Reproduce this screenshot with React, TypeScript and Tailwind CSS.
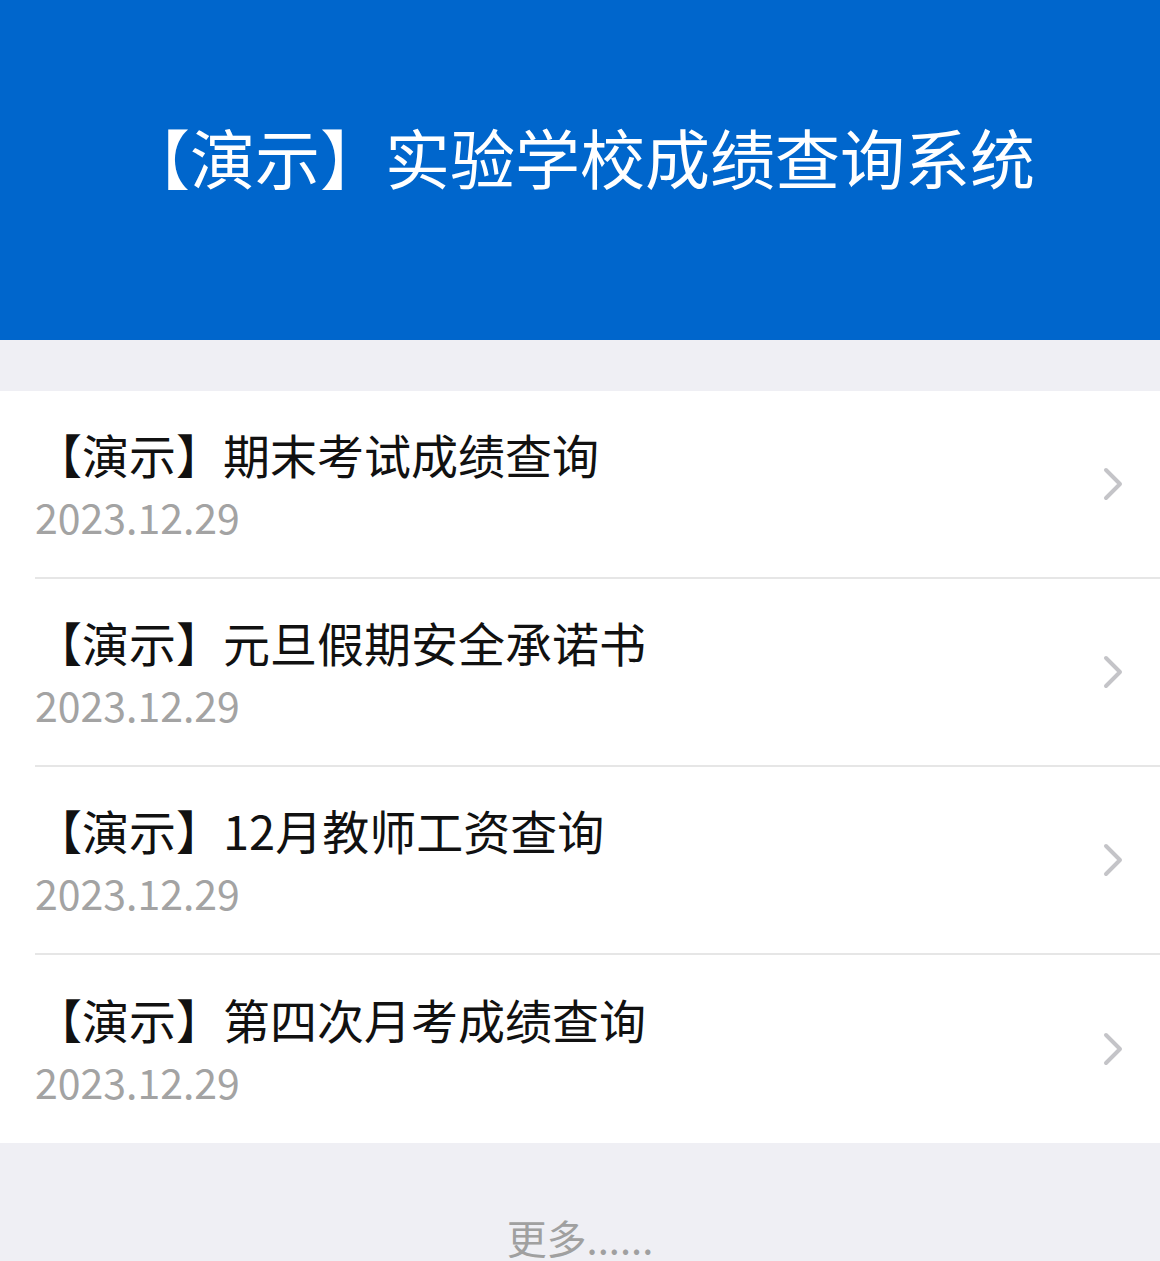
const notices = [
  { title: "【演示】期末考试成绩查询", date: "2023.12.29" },
  { title: "【演示】元旦假期安全承诺书", date: "2023.12.29" },
  { title: "【演示】12月教师工资查询", date: "2023.12.29" },
  { title: "【演示】第四次月考成绩查询", date: "2023.12.29" },
];

const font = { fontFamily: '"Noto Sans CJK SC", "Noto Sans", sans-serif' };

function Chevron() {
  return (
    <svg width="22" height="36" viewBox="0 0 22 36" fill="none" className="shrink-0">
      <polyline
        points="4,4 18,18 4,32"
        stroke="#c4c4c8"
        strokeWidth="4"
        strokeLinecap="round"
        strokeLinejoin="round"
      />
    </svg>
  );
}

export default function App() {
  return (
    <div className="min-h-[1261px] w-full bg-[#efeff4]" style={font}>
      <header className="flex h-[340px] justify-center bg-[#0066cc] pt-[120px]">
        <h1 className="text-[65px] leading-[72px] font-normal whitespace-nowrap text-white">
          【演示】实验学校成绩查询系统
        </h1>
      </header>

      <ul className="mt-[51px] bg-white">
        {notices.map((n, i) => (
          <li key={n.title} className="pl-[35px]">
            <div
              className={`flex h-[188px] items-center justify-between pr-[36px] ${
                i < notices.length - 1 ? "border-b-2 border-[#e6e6e6]" : ""
              }`}
            >
              <div className="flex flex-col">
                <span className="text-[47px] leading-[56px] text-[#111]">{n.title}</span>
                <span className="mt-[8px] text-[41px] leading-[52px] text-[#a3a3a3]">{n.date}</span>
              </div>
              <Chevron />
            </div>
          </li>
        ))}
      </ul>

      <div className="flex justify-center pt-[68px] pb-[10px]">
        <span className="text-[40px] leading-[52px] text-[#a0a0a0]">更多......</span>
      </div>
    </div>
  );
}
